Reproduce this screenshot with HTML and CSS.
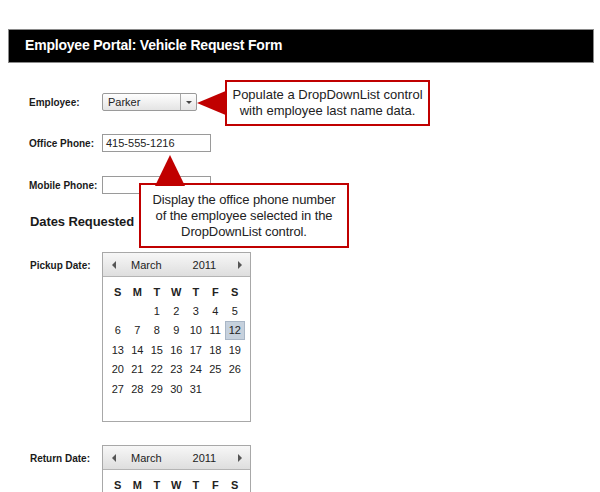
FILE: index.html
```html
<!DOCTYPE html>
<html>
<head>
<meta charset="utf-8">
<link rel="stylesheet" href="styles.css">
</head>
<body>
<div class="page">
  <div class="header">Employee Portal: Vehicle Request Form</div>
  <div class="form">
    <div class="row row-employee">
      <span class="label">Employee:</span>
      <div class="select"><span class="select-value">Parker</span><span class="select-btn"><span class="caret"></span></span></div>
    </div>
    <div class="row row-office">
      <span class="label">Office Phone:</span>
      <div class="input">415-555-1216</div>
    </div>
    <div class="row row-mobile">
      <span class="label">Mobile Phone:</span>
      <div class="input"></div>
    </div>
    <div class="section">Dates Requested</div>
    <div class="row row-cal row-pickup">
      <span class="label">Pickup Date:</span>
      <div class="cal">
        <div class="cal-head"><span class="arr arr-l"></span><span class="month">March</span><span class="year">2011</span><span class="arr arr-r"></span></div>
        <div class="cal-grid">
          <span class="dn">S</span><span class="dn">M</span><span class="dn">T</span><span class="dn">W</span><span class="dn">T</span><span class="dn">F</span><span class="dn">S</span>
          <span></span><span></span><span>1</span><span>2</span><span>3</span><span>4</span><span>5</span>
          <span>6</span><span>7</span><span>8</span><span>9</span><span>10</span><span>11</span><span class="sel">12</span>
          <span>13</span><span>14</span><span>15</span><span>16</span><span>17</span><span>18</span><span>19</span>
          <span>20</span><span>21</span><span>22</span><span>23</span><span>24</span><span>25</span><span>26</span>
          <span>27</span><span>28</span><span>29</span><span>30</span><span>31</span><span></span><span></span>
        </div>
      </div>
    </div>
    <div class="row row-cal row-return">
      <span class="label">Return Date:</span>
      <div class="cal">
        <div class="cal-head"><span class="arr arr-l"></span><span class="month">March</span><span class="year">2011</span><span class="arr arr-r"></span></div>
        <div class="cal-grid">
          <span class="dn">S</span><span class="dn">M</span><span class="dn">T</span><span class="dn">W</span><span class="dn">T</span><span class="dn">F</span><span class="dn">S</span>
        </div>
      </div>
    </div>
  </div>

  <svg class="tri tri-left" width="32" height="30" viewBox="0 0 32 30"><polygon points="0,14 31,1 31,27" fill="#c00000"/></svg>
  <div class="callout callout-1">Populate a DropDownList control<br>with employee last name data.</div>

  <svg class="tri tri-up" width="32" height="31" viewBox="0 0 32 31"><polygon points="15,0 0,31 30,31" fill="#c00000"/></svg>
  <div class="callout callout-2">Display the office phone number<br>of the employee selected in the<br>DropDownList control.</div>
</div>
</body>
</html>
```

FILE: styles.css
```css
html, body {
  margin: 0;
  padding: 0;
  background: #fff;
}
body {
  font-family: "Liberation Sans", Arial, sans-serif;
  color: #1a1a1a;
  height: 492px;
  overflow: hidden;
}
.page {
  position: relative;
  padding: 29px 7px 0 8px;
}
.header {
  box-sizing: border-box;
  width: 586px;
  height: 34px;
  background: #000;
  border: 1px solid #8a8a8a;
  color: #fff;
  font-size: 14px;
  letter-spacing: -0.2px;
  font-weight: bold;
  display: flex;
  align-items: center;
  padding-left: 16px;
  padding-bottom: 2px;
}
.form {
  padding-left: 21px;
}
.row {
  display: flex;
  align-items: center;
}
.label {
  width: 73px;
  flex: none;
  font-size: 10px;
  font-weight: bold;
  color: #1a1a1a;
}
.row-employee { margin-top: 30px; height: 18px; }
.row-office { margin-top: 23px; height: 18px; }
.row-mobile { margin-top: 24px; height: 18px; }

.select {
  box-sizing: border-box;
  width: 95px;
  height: 18px;
  border: 1px solid #9a9a9a;
  border-radius: 2px;
  background: linear-gradient(#fefefe, #e4e4e4);
  display: flex;
  font-size: 11px;
}
.select-value {
  flex: 1;
  padding-left: 5px;
  line-height: 16px;
  color: #222;
}
.select-btn {
  width: 15px;
  border-left: 1px solid #a8a8a8;
  display: flex;
  align-items: center;
  justify-content: center;
}
.caret {
  width: 0;
  height: 0;
  border-left: 3px solid transparent;
  border-right: 3px solid transparent;
  border-top: 3px solid #444;
}
.input {
  box-sizing: border-box;
  width: 109px;
  height: 18px;
  border: 1px solid #9a9a9a;
  font-size: 11px;
  line-height: 16px;
  padding-left: 3px;
  color: #222;
  background: #fff;
}
.section {
  margin-top: 20px;
  height: 15px;
  line-height: 15px;
  font-size: 13px;
  font-weight: bold;
  letter-spacing: -0.1px;
  padding-left: 1px;
  color: #1a1a1a;
}
.row-cal {
  align-items: flex-start;
}
.row-cal .label {
  padding-top: 8px;
  padding-left: 1px;
  width: 72px;
}
.row-pickup { margin-top: 23px; }
.row-return { margin-top: 23px; }

.cal {
  box-sizing: border-box;
  width: 149px;
  border: 1px solid #a8a8a8;
  background: #fff;
}
.cal-head {
  height: 24px;
  box-sizing: border-box;
  border-bottom: 1px solid #b4b4b4;
  background: linear-gradient(#f7f7f7, #dedede);
  display: flex;
  align-items: center;
  font-size: 11px;
  color: #222;
  padding: 0 8px 0 9px;
}
.arr {
  width: 0;
  height: 0;
  border-top: 4px solid transparent;
  border-bottom: 4px solid transparent;
}
.arr-l { border-right: 4px solid #555; }
.arr-r { border-left: 4px solid #555; margin-left: auto; }
.month { margin-left: 15px; }
.year { margin-left: 31px; }

.cal-grid {
  display: grid;
  grid-template-columns: repeat(7, 19.5px);
  grid-template-rows: 19px repeat(6, 19.5px);
  padding: 5px 0 3px 5px;
  font-size: 11px;
  color: #222;
}
.row-return .cal-grid {
  grid-template-rows: 19px;
}
.cal-grid span {
  display: flex;
  align-items: center;
  justify-content: center;
}
.cal-grid .dn {
  font-weight: bold;
}
.cal-grid .sel {
  box-sizing: border-box;
  background: #c6d1dd;
  border: 1px solid #a9b6c6;
}

.callout {
  position: absolute;
  box-sizing: border-box;
  background: #fff;
  border: 2px solid #c00000;
  font-size: 13px;
  line-height: 16px;
  text-align: center;
  color: #222;
  display: flex;
  align-items: center;
  justify-content: center;
}
.callout-1 {
  left: 225px;
  top: 80px;
  width: 205px;
  height: 46px;
}
.callout-2 {
  left: 139px;
  top: 183px;
  width: 210px;
  height: 65px;
  letter-spacing: -0.1px;
}
.tri {
  position: absolute;
  display: block;
}
.tri-left {
  left: 197px;
  top: 89px;
}
.tri-up {
  left: 155px;
  top: 155px;
  z-index: 2;
}
```
